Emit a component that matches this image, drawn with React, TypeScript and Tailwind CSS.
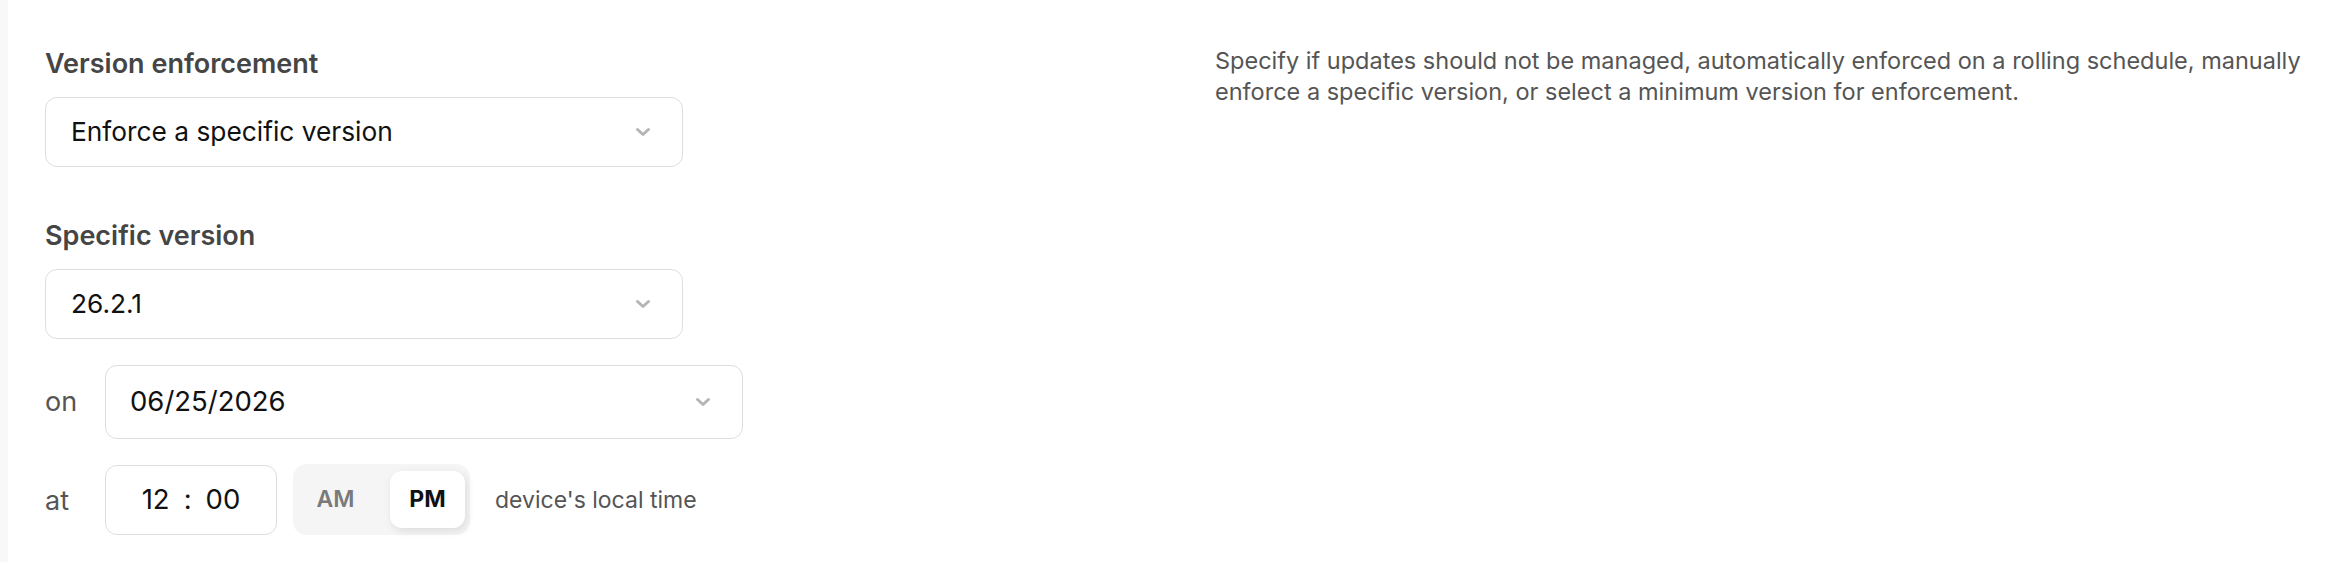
import type { ReactNode } from "react";

function Chevron() {
  return (
    <svg width="16" height="10" viewBox="0 0 16 10" className="shrink-0">
      <path
        d="M2.5 2.5l5.5 5 5.5-5"
        fill="none"
        stroke="#b5b5b5"
        strokeWidth="3"
        strokeLinecap="round"
        strokeLinejoin="round"
      />
    </svg>
  );
}

function Select({ children, tall }: { children: ReactNode; tall?: boolean }) {
  return (
    <div
      className={
        tall
          ? "flex h-[74px] w-[638px] items-center justify-between rounded-[12px] border-[1.5px] border-[#dedede] bg-white pl-[24px] pr-[31px] text-[27.5px] text-[#111]"
          : "flex h-[70px] w-[638px] items-center justify-between rounded-[12px] border-[1.5px] border-[#dedede] bg-white pl-[25px] pr-[31px] text-[26.3px] text-[#111]"
      }
    >
      <span>{children}</span>
      <Chevron />
    </div>
  );
}

export default function App() {
  return (
    <div className="flex h-[562px] w-full bg-white [font-family:Inter,sans-serif]">
      <div className="w-[8px] shrink-0 bg-[#f8f8f8]" />

      {/* form column */}
      <div className="flex w-[1207px] shrink-0 flex-col pl-[37px] pt-[46px]">
        <div className="text-[27px] leading-[36px] font-semibold text-[#454545]">
          Version enforcement
        </div>
        <div className="mt-[15px]">
          <Select>Enforce a specific version</Select>
        </div>

        <div className="mt-[51px] text-[27px] leading-[36px] font-semibold text-[#454545]">
          Specific version
        </div>
        <div className="mt-[15px]">
          <Select>26.2.1</Select>
        </div>

        <div className="mt-[26px] flex items-center">
          <span className="w-[60px] text-[27px] text-[#555]">on</span>
          <Select tall>06/25/2026</Select>
        </div>

        <div className="mt-[25px] flex h-[71px] items-center">
          <span className="w-[60px] pt-[4px] text-[27px] text-[#555]">at</span>
          <div className="flex h-[70px] w-[172px] items-center justify-center gap-[14px] rounded-[12px] border-[1.5px] border-[#dedede] bg-white text-[27.5px] text-[#111]">
            <span>12</span>
            <span>:</span>
            <span>00</span>
          </div>
          <div className="ml-[16px] flex h-[71px] items-center gap-[17px] rounded-[14px] bg-[#f5f5f5] px-[5px]">
            <div className="flex h-[57px] w-[75px] items-center justify-center text-[23px] font-semibold text-[#7a7a7a]">
              AM
            </div>
            <div className="flex h-[57px] w-[75px] items-center justify-center rounded-[12px] bg-white text-[23px] font-bold text-[#111] shadow-[2px_3px_8px_rgba(0,0,0,0.1)]">
              PM
            </div>
          </div>
          <span className="ml-[25px] pt-[2px] text-[23px] text-[#555]">device's local time</span>
        </div>
      </div>

      {/* help text */}
      <p className="w-[1110px] pt-[45px] text-[23.5px] leading-[31px] text-[#555]">
        Specify if updates should not be managed, automatically enforced on a rolling schedule,
        manually enforce a specific version, or select a minimum version for enforcement.
      </p>
    </div>
  );
}
